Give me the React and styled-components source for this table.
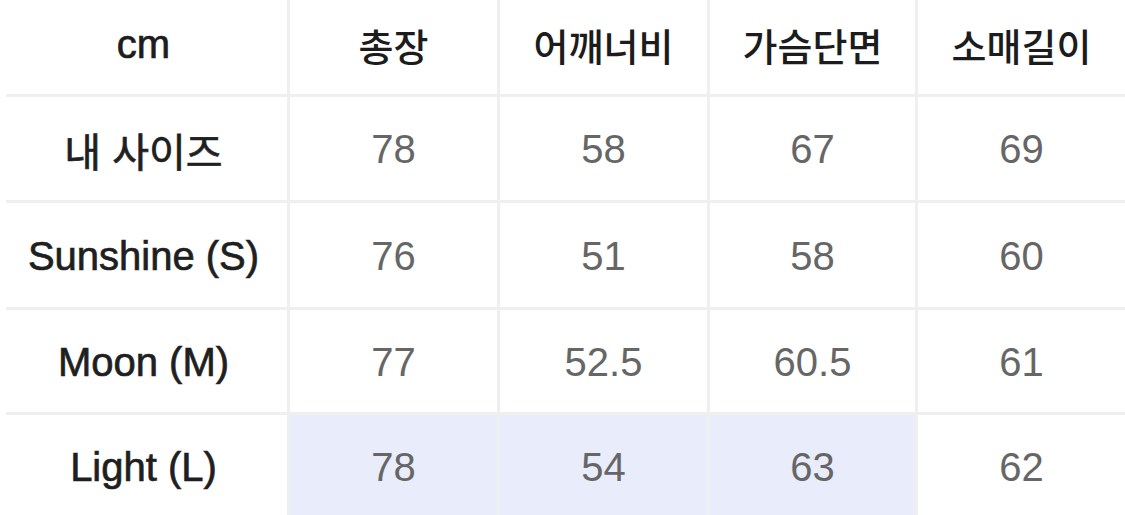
import React from "react";
import styled, { createGlobalStyle } from "styled-components";

const GlobalStyle = createGlobalStyle`
  html, body {
    margin: 0;
    padding: 0;
    background: #fff;
  }
  body {
    font-family: "Liberation Sans", "Noto Sans CJK KR", sans-serif;
  }
`;

const columns = ["총장", "어깨너비", "가슴단면", "소매길이"];

const rows = [
  { label: "내 사이즈", values: ["78", "58", "67", "69"] },
  { label: "Sunshine (S)", values: ["76", "51", "58", "60"] },
  { label: "Moon (M)", values: ["77", "52.5", "60.5", "61"] },
  { label: "Light (L)", values: ["78", "54", "63", "62"], highlight: [0, 1, 2] },
];

const App = () => (
  <>
    <GlobalStyle />
    <Table>
      <UnitCell>cm</UnitCell>
      {columns.map((c, i) => (
        <HeadCell key={c} last={i === columns.length - 1}>
          {c}
        </HeadCell>
      ))}
      {rows.map((row, r) => (
        <React.Fragment key={row.label}>
          <LabelCell lastRow={r === rows.length - 1}>{row.label}</LabelCell>
          {row.values.map((v, i) => (
            <ValueCell
              key={i}
              last={i === row.values.length - 1}
              lastRow={r === rows.length - 1}
              highlight={row.highlight?.includes(i)}
            >
              {v}
            </ValueCell>
          ))}
        </React.Fragment>
      ))}
    </Table>
  </>
);

export default App;

const Table = styled.div`
  display: grid;
  grid-template-columns: 284px 210px 210px 208px 1fr;
  grid-template-rows: 97px 106px 107px 105px 102px;
  width: 1125px;
  height: 515px;
  padding-left: 6px;
  box-sizing: border-box;
  overflow: hidden;
`;

const Cell = styled.div`
  display: flex;
  align-items: center;
  justify-content: center;
  font-size: 40px;
  border-right: ${({ last }) => (last ? "none" : "3px solid #efefef")};
  border-bottom: ${({ lastRow }) => (lastRow ? "none" : "3px solid #efefef")};
  white-space: nowrap;
`;

const HeadCell = styled(Cell)`
  color: #1c1c1c;
  font-family: "Noto Sans CJK KR", "Liberation Sans", sans-serif;
  font-size: 38px;
  font-weight: 500;
  padding-bottom: 6px;
`;

const UnitCell = styled(Cell)`
  color: #1c1c1c;
  padding: 0 6px 6px 0;
  -webkit-text-stroke: 0.7px #1c1c1c;
`;

const LabelCell = styled(Cell)`
  color: #1f1f1f;
  padding: 2px 6px 0 0;
  -webkit-text-stroke: 0.7px #1f1f1f;
`;

const ValueCell = styled(Cell)`
  color: #666;
  padding-top: 2px;
  background: ${({ highlight }) => (highlight ? "#e8ecfb" : "#fff")};
`;
